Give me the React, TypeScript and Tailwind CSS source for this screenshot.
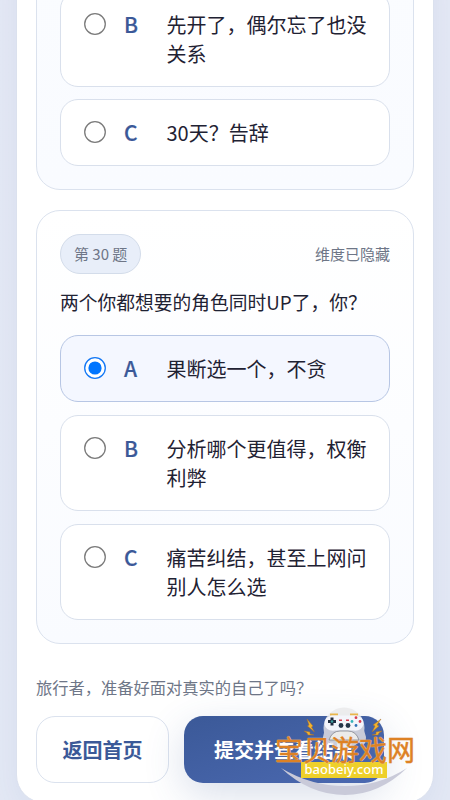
import { useState } from 'react';
import clsx from 'clsx';

type Option = { key: string; text: string };

const previousOptions: Option[] = [
  { key: 'B', text: '先开了，偶尔忘了也没关系' },
  { key: 'C', text: '30天？告辞' },
];

const currentOptions: Option[] = [
  { key: 'A', text: '果断选一个，不贪' },
  { key: 'B', text: '分析哪个更值得，权衡利弊' },
  { key: 'C', text: '痛苦纠结，甚至上网问别人怎么选' },
];

function Radio({ checked }: { checked: boolean }) {
  return (
    <svg viewBox="0 0 22 22" className="w-[22px] h-[22px] shrink-0 mt-[3px]">
      <circle cx="11" cy="11" r="10.3" fill="#fff" stroke={checked ? '#1478f5' : '#7b7b7b'} strokeWidth="1.3" />
      {checked && <circle cx="11" cy="11" r="6.6" fill="#0075ff" />}
    </svg>
  );
}

function OptionRow({ option, checked, onSelect }: { option: Option; checked: boolean; onSelect: () => void }) {
  return (
    <button
      type="button"
      role="radio"
      aria-checked={checked}
      onClick={onSelect}
      className={clsx(
        'flex items-start w-full rounded-[18px] border pl-[23px] pr-[22px] pt-[18px] pb-[17.4px] text-left text-xl leading-[29.5px]',
        checked ? 'bg-[#f4f7ff] border-[#b7c6e4]' : 'bg-white border-[#d9e0ec]',
      )}
    >
      <Radio checked={checked} />
      <span className="w-[42.5px] ml-[18px] shrink-0 text-[21px] font-medium text-[#3b5998] [-webkit-text-stroke:0.2px_#3b5998]">
        {option.key}
      </span>
      <span className="w-[202px] text-[#1f2233]">{option.text}</span>
    </button>
  );
}

function OptionList({ options, initial }: { options: Option[]; initial?: string }) {
  const [selected, setSelected] = useState(initial);
  return (
    <div role="radiogroup" className="flex flex-col gap-[12.6px]">
      {options.map((option) => (
        <OptionRow
          key={option.key}
          option={option}
          checked={selected === option.key}
          onSelect={() => setSelected(option.key)}
        />
      ))}
    </div>
  );
}

function Bolt({ d }: { d: string }) {
  return <path d={d} fill="#f5b52c" stroke="#a86f2c" strokeWidth="0.5" />;
}

function Watermark() {
  return (
    <div className="absolute left-[275px] top-[704px] w-[142px] h-[94px] pointer-events-none">
      <svg viewBox="0 0 142 94" className="absolute inset-0 w-full h-full">
        <circle cx="69" cy="24" r="20.5" fill="#e9e9ea" opacity=".8" />
        <path d="M6 64Q36 82 70 82Q104 82 132 64Q104 91 70 91Q35 91 6 64Z" fill="#c9cad9" />
        <path d="M52 16Q69 10 86 16L91 33Q91 42 86 41L77 29H61L52 41Q47 42 48 33Z" fill="#c9cbd8" />
        <path d="M55 10.5h8M75 10.5h8" stroke="#e9b54b" strokeWidth="2" />
        <path d="M57 11.5h24q8 1 7.5 9-2 7-10 6H60q-9 1-10.5-6-.5-8 7.5-9Z" fill="#f4f5fb" />
        <path d="M57 13.5v8M53 17.5h8" stroke="#202d40" strokeWidth="3" />
        <circle cx="57" cy="17.5" r="1.3" fill="#3da0a0" />
        <g fill="#d83e51">
          <circle cx="81" cy="13.7" r="1.4" />
          <circle cx="85" cy="17.5" r="1.4" />
          <rect x="64" y="15.5" width="3" height="1.5" />
          <rect x="71" y="15.5" width="3" height="1.5" />
        </g>
        <circle cx="77" cy="17.5" r="1.4" fill="#35b4ba" />
        <circle cx="81" cy="21.5" r="1.4" fill="#3174b6" />
        <circle cx="66" cy="21.5" r="2.4" fill="#26364a" />
        <circle cx="73" cy="21.5" r="2.4" fill="#26364a" />
        <path d="M54 36q3-9 11-9h8q8 0 11 9Z" fill="#ecebea" stroke="#777983" strokeWidth="0.7" />
        <Bolt d="M32 15l6 7-1.500 1 3 5-7-6 1.500-1Z" />
        <Bolt d="M29 27l6 1v2l4 1-6 0-1-2Z" />
        <Bolt d="M106 15l-8 6 2 1-3 6 7-6-2-1Z" />
        <Bolt d="M107 27l-6 1v2l-4 1 6 0 1-2Z" />
      </svg>
      <div className="absolute left-[26px] top-[58px] w-[86px] h-4 bg-[#eed02a] text-center font-['Noto_Sans'] font-medium text-[13px] leading-[15px] text-white">
        baobeiy.com
      </div>
      <div className="absolute left-0 top-[30.5px] whitespace-nowrap text-[28px] leading-[28px] font-normal text-[#dd8124] [-webkit-text-stroke:0.4px_#dd8124] [text-shadow:0_0_1px_#fff,0_0_1px_#f5d9b8]">
        宝贝游戏网
      </div>
    </div>
  );
}

export default function App() {
  return (
    <div className="relative w-[450px] h-[800px] overflow-hidden bg-linear-to-b from-[#e5e9f5] to-[#e4e9f5] font-['Noto_Sans_CJK_SC',sans-serif]">
      <main className="mx-4 -mt-[61px] h-[864px] px-[19px] pt-[26px] rounded-[28px] border border-[#dbe1ee] bg-white shadow-[0_12px_36px_rgba(59,89,152,0.07)]">
        <section className="rounded-[24px] border border-[#dbe2ee] bg-linear-to-b from-[#fafcff] to-[#f9fbff] px-[23px] pt-[23.5px] pb-[23px]">
          <OptionList options={previousOptions} />
        </section>

        <section className="mt-5 rounded-[24px] border border-[#dbe2ee] bg-linear-to-b from-white to-[#f9fbff] px-[23px] pt-[23px] pb-[23px]">
          <div className="flex items-center justify-between text-[15px] text-[#6e7687]">
            <span className="flex items-center h-10 px-[13px] rounded-full border border-[#d3dcea] bg-[#e8eef9]">第 30 题</span>
            <span>维度已隐藏</span>
          </div>
          <h2 className="mt-[14px] mb-[18.9px] text-[18.75px] leading-7 font-normal text-[#1f2233] whitespace-nowrap">
            两个你都想要的角色同时UP了，你？
          </h2>
          <OptionList options={currentOptions} initial="A" />
        </section>

        <footer className="pt-[31px]">
          <p className="text-[16.25px] leading-6 text-[#6e7687]">旅行者，准备好面对真实的自己了吗？</p>
          <div className="flex gap-[15px] mt-[16.5px] text-xl font-bold">
            <button className="w-[133px] h-[67px] pt-[2px] rounded-[19px] border border-[#dbe2ee] bg-white text-[#3b5998]">返回首页</button>
            <button className="w-[200px] h-[67px] pt-[2px] rounded-[19px] bg-linear-to-br from-[#3b5998] to-[#4b69b1] text-white shadow-[0_12px_40px_rgba(59,89,152,0.2)]">
              提交并查看结果
            </button>
          </div>
        </footer>
      </main>
      <Watermark />
    </div>
  );
}
